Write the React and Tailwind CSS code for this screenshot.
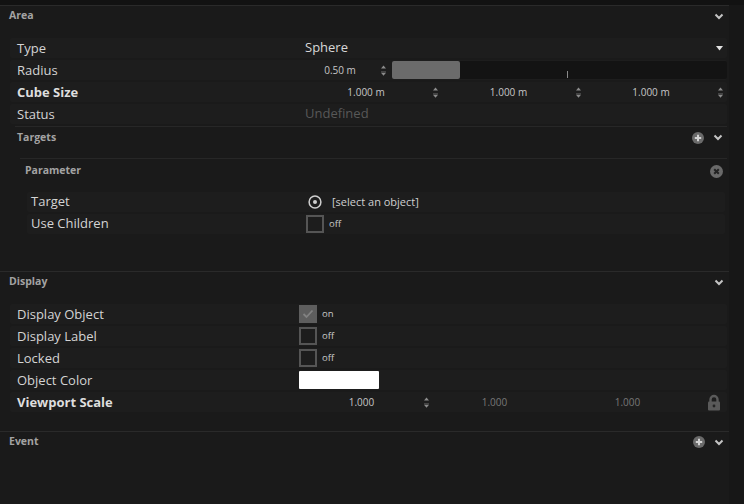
import React from "react";

const FONT = { fontFamily: '"Open Sans", "Noto Sans", sans-serif' };

function Chevron() {
  return (
    <svg width="10" height="7" viewBox="0 0 10 7">
      <polyline points="1.5,1.5 5,5 8.5,1.5" fill="none" stroke="#c4c4c4" strokeWidth="2" />
    </svg>
  );
}

function PlusCircle() {
  return (
    <svg width="12" height="12" viewBox="0 0 12 12">
      <circle cx="6" cy="6" r="6" fill="#6a6a6a" />
      <line x1="6" y1="2.8" x2="6" y2="9.2" stroke="#d2d2d2" strokeWidth="2" />
      <line x1="2.8" y1="6" x2="9.2" y2="6" stroke="#d2d2d2" strokeWidth="2" />
    </svg>
  );
}

function XCircle() {
  return (
    <svg width="13" height="13" viewBox="0 0 13 13">
      <circle cx="6.5" cy="6.5" r="6.5" fill="#6a6a6a" />
      <line x1="4.2" y1="4.2" x2="8.8" y2="8.8" stroke="#222" strokeWidth="2" />
      <line x1="8.8" y1="4.2" x2="4.2" y2="8.8" stroke="#222" strokeWidth="2" />
    </svg>
  );
}

function Spinner() {
  return (
    <svg width="7" height="13" viewBox="0 0 7 13">
      <polygon points="1,4.5 3.5,1.5 6,4.5" fill="#8c8c8c" />
      <line x1="1" y1="7.8" x2="6" y2="7.8" stroke="#666" strokeWidth="0.8" />
      <polygon points="1,8.8 3.5,11.8 6,8.8" fill="#8c8c8c" />
    </svg>
  );
}

function Lock() {
  return (
    <svg width="14" height="17" viewBox="0 0 14 17">
      <path d="M3.5 8 V5.5 a3.5 3.5 0 0 1 7 0 V8" fill="none" stroke="#5a5a5a" strokeWidth="2.4" />
      <rect x="1" y="7.5" width="12" height="9" rx="1" fill="#5a5a5a" />
      <circle cx="7" cy="12" r="1.4" fill="#232323" />
    </svg>
  );
}

function Radio() {
  return (
    <svg width="14" height="14" viewBox="0 0 14 14">
      <circle cx="7" cy="7" r="5.9" fill="none" stroke="#cfcfcf" strokeWidth="1.5" />
      <circle cx="7" cy="7" r="2" fill="#cfcfcf" />
    </svg>
  );
}

function Checkbox({ checked }) {
  if (checked) {
    return (
      <div className="w-[18px] h-[18px] bg-[#5e5e5e] border-2 border-[#5e5e5e] flex items-center justify-center">
        <svg width="12" height="10" viewBox="0 0 12 10">
          <polyline points="1.5,5 4.5,8 10.5,1.5" fill="none" stroke="#828282" strokeWidth="1.8" />
        </svg>
      </div>
    );
  }
  return <div className="w-[18px] h-[18px] border-2 border-[#555555]" />;
}

function SectionHeader({ title, right }) {
  return (
    <div className="h-[21px] flex items-center justify-between pl-[9px] pr-[5px] border-t border-[#2a2a2a]">
      <span className="text-[10.5px] font-bold text-[#a3a3a3]">{title}</span>
      <div className="flex items-center gap-[9px]">{right}<Chevron /></div>
    </div>
  );
}

function Row({ label, bold, children, labelW = "w-[290px]" }) {
  return (
    <div className="h-[20px] mb-[2px] flex items-center bg-[#1d1d1d] rounded-[2px]">
      <div className={`${labelW} pl-[7px] shrink-0 text-[13px] leading-none ${bold ? "font-bold text-[#dedede]" : "text-[#d4d4d4]"}`}>
        {label}
      </div>
      <div className="flex-1 h-full flex items-center">{children}</div>
    </div>
  );
}

function NumField({ value, w, dim, spinner = true }) {
  return (
    <div className={`${w} h-full flex items-center pr-[3px]`}>
      <div className={`flex-1 text-center text-[10px] ${dim ? "text-[#777777]" : "text-[#c6c6c6]"}`}>{value}</div>
      <div className="w-[7px] flex items-center">{spinner ? <Spinner /> : null}</div>
    </div>
  );
}

export default function App() {
  return (
    <div className="w-[744px] h-[504px] bg-[#1a1a1a] flex flex-col overflow-hidden" style={FONT}>
      <div className="h-[5px] bg-[#121212] shrink-0" />
      <div className="flex flex-1">
        <div className="w-[729px] flex flex-col">
          {/* Area */}
          <SectionHeader title="Area" />
          <div className="pl-[10px] pr-[2px] pt-[12px]">
            <Row label="Type">
              <div className="flex-1 flex items-center justify-between pl-[5px] pr-[4px]">
                <span className="text-[13px] text-[#d8d8d8]">Sphere</span>
                <svg width="7" height="5" viewBox="0 0 7 5"><polygon points="0,0 7,0 3.5,4.5" fill="#e2e2e2" /></svg>
              </div>
            </Row>
            <Row label="Radius">
              <NumField value="0.50 m" w="w-[90px]" />
              <div className="ml-[2px] flex-1 h-[18px] bg-[#131313] rounded-[2px] relative">
                <div className="w-[68px] h-full bg-[#6b6b6b] rounded-[2px]" />
                <div className="absolute left-[175px] bottom-[1px] w-px h-[7px] bg-[#8a8a8a]" />
              </div>
            </Row>
            <Row label="Cube Size" bold>
              <NumField value="1.000 m" w="w-[142px]" />
              <NumField value="1.000 m" w="w-[143px]" />
              <NumField value="1.000 m" w="flex-1" />
            </Row>
            <Row label="Status">
              <span className="pl-[5px] text-[13px] text-[#585858]">Undefined</span>
            </Row>

            {/* Targets */}
            <div className="ml-[5px] mt-[1px] border-t border-[#272727]">
              <div className="h-[20px] flex items-center justify-between pl-[2px] pr-[4px] pt-[1px]">
                <span className="text-[10.5px] font-bold text-[#a3a3a3]">Targets</span>
                <div className="flex items-center gap-[9px]"><PlusCircle /><Chevron /></div>
              </div>
              <div className="ml-[5px] mt-[11px] border-t border-[#272727]">
                <div className="h-[22px] flex items-center justify-between pl-[5px] pr-[4px] pt-[2px]">
                  <span className="text-[10.5px] font-bold text-[#a3a3a3]">Parameter</span>
                  <XCircle />
                </div>
                <div className="ml-[7px] mr-[2px] mt-[11px]">
                  <div className="h-[20px] mb-[2px] flex items-center bg-[#1d1d1d] rounded-[2px]">
                    <div className="w-[279px] pl-[4px] shrink-0 text-[13px] text-[#d4d4d4]">Target</div>
                    <div className="ml-[2px] flex items-center"><Radio /></div>
                    <span className="ml-[10px] text-[11px] text-[#d0d0d0]">[select an object]</span>
                  </div>
                  <div className="h-[20px] mb-[2px] flex items-center bg-[#1d1d1d] rounded-[2px]">
                    <div className="w-[279px] pl-[4px] shrink-0 text-[13px] text-[#d4d4d4]">Use Children</div>
                    <Checkbox />
                    <span className="ml-[5px] text-[9.5px] text-[#c8c8c8]">off</span>
                  </div>
                </div>
              </div>
            </div>
          </div>

          {/* Display */}
          <div className="mt-[35px]">
            <SectionHeader title="Display" />
          </div>
          <div className="pl-[10px] pr-[2px] pt-[12px]">
            <Row label="Display Object" labelW="w-[289px]">
              <Checkbox checked />
              <span className="ml-[5px] text-[9.5px] text-[#c8c8c8]">on</span>
            </Row>
            <Row label="Display Label" labelW="w-[289px]">
              <Checkbox />
              <span className="ml-[5px] text-[9.5px] text-[#c8c8c8]">off</span>
            </Row>
            <Row label="Locked" labelW="w-[289px]">
              <Checkbox />
              <span className="ml-[5px] text-[9.5px] text-[#c8c8c8]">off</span>
            </Row>
            <Row label="Object Color" labelW="w-[289px]">
              <div className="w-[80px] h-[18px] bg-white rounded-[1px]" />
            </Row>
            <Row label="Viewport Scale" bold labelW="w-[290px]">
              <NumField value="1.000" w="w-[133px]" />
              <NumField value="1.000" w="w-[133px]" dim spinner={false} />
              <NumField value="1.000" w="w-[133px]" dim spinner={false} />
              <div className="flex-1 flex items-center justify-center pl-[2px]"><Lock /></div>
            </Row>
          </div>

          {/* Event */}
          <div className="mt-[17px]">
            <SectionHeader title="Event" right={<PlusCircle />} />
          </div>
        </div>
        <div className="flex-1 bg-[#171717]" />
      </div>
    </div>
  );
}
